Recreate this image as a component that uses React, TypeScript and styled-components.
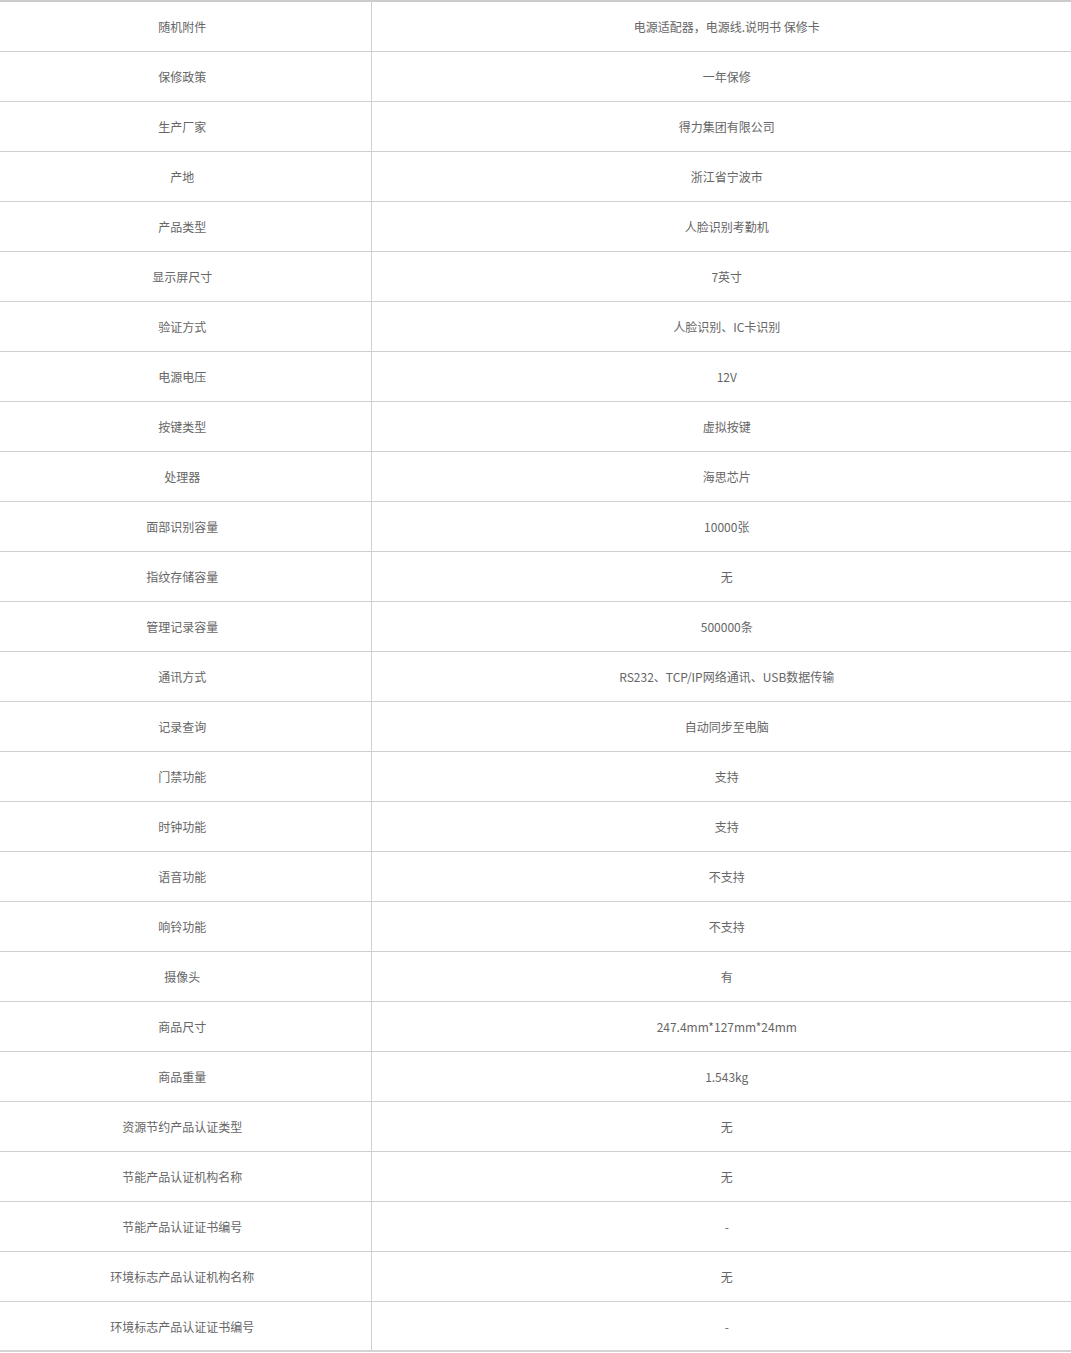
import styled, { createGlobalStyle } from 'styled-components';

const GlobalStyle = createGlobalStyle`
    html, body {
        margin: 0;
        padding: 0;
        background: #fff;
    }
    body {
        font-family: "Noto Sans CJK SC", "Liberation Sans", sans-serif;
    }
`

const SpecTable = styled.table`
    width: 1071px;
    border-collapse: collapse;
    table-layout: fixed;
    border-top: 2px solid #cccccc;
    border-bottom: 2px solid #d4d4d4;
`

const Row = styled.tr`
    height: 50px;
    border-bottom: 1px solid #d0d0d0;
    &:last-child {
        border-bottom: none;
    }
`

type CellProps = {
    $side: 'label' | 'value'
}

const Cell = styled.td<CellProps>`
    box-sizing: border-box;
    padding: 2px 0 0;
    padding-left: ${({ $side }) => ($side === 'value' ? '11px' : '0')};
    padding-right: ${({ $side }) => ($side === 'label' ? '6px' : '0')};
    width: ${({ $side }) => ($side === 'label' ? '371px' : 'auto')};
    border-right: ${({ $side }) => ($side === 'label' ? '1px solid #d0d0d0' : 'none')};
    text-align: center;
    vertical-align: middle;
    font-size: 12px;
    line-height: 16px;
    color: #666666;
`

const specs: [string, string][] = [
    ['随机附件', '电源适配器，电源线.说明书 保修卡'],
    ['保修政策', '一年保修'],
    ['生产厂家', '得力集团有限公司'],
    ['产地', '浙江省宁波市'],
    ['产品类型', '人脸识别考勤机'],
    ['显示屏尺寸', '7英寸'],
    ['验证方式', '人脸识别、IC卡识别'],
    ['电源电压', '12V'],
    ['按键类型', '虚拟按键'],
    ['处理器', '海思芯片'],
    ['面部识别容量', '10000张'],
    ['指纹存储容量', '无'],
    ['管理记录容量', '500000条'],
    ['通讯方式', 'RS232、TCP/IP网络通讯、USB数据传输'],
    ['记录查询', '自动同步至电脑'],
    ['门禁功能', '支持'],
    ['时钟功能', '支持'],
    ['语音功能', '不支持'],
    ['响铃功能', '不支持'],
    ['摄像头', '有'],
    ['商品尺寸', '247.4mm*127mm*24mm'],
    ['商品重量', '1.543kg'],
    ['资源节约产品认证类型', '无'],
    ['节能产品认证机构名称', '无'],
    ['节能产品认证证书编号', '-'],
    ['环境标志产品认证机构名称', '无'],
    ['环境标志产品认证证书编号', '-'],
]

const App = () => {
    return (
        <>
            <GlobalStyle />
            <SpecTable>
                <tbody>
                    {specs.map(([label, value]) => (
                        <Row key={label}>
                            <Cell $side="label">{label}</Cell>
                            <Cell $side="value">{value}</Cell>
                        </Row>
                    ))}
                </tbody>
            </SpecTable>
        </>
    );
};

export default App;
